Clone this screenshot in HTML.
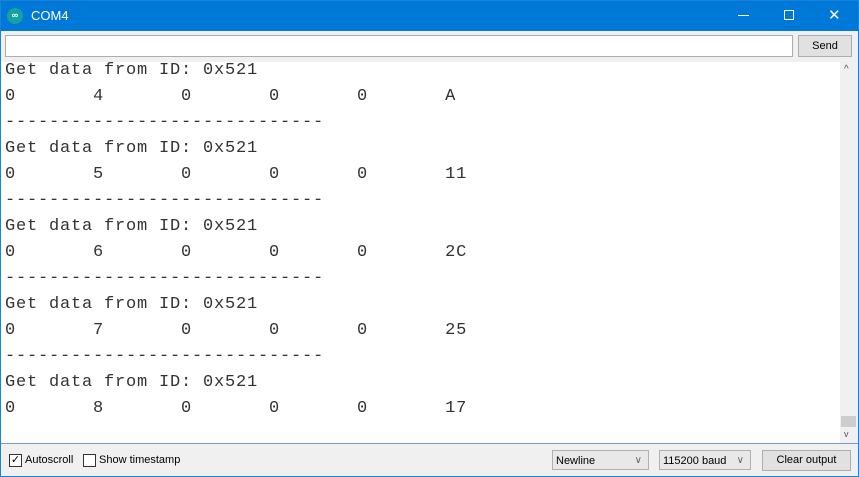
<!DOCTYPE html><html><head><style>
body{margin:0;width:859px;height:477px;overflow:hidden;background:#f0f0f0;font-family:"Liberation Sans",sans-serif;position:relative}
.b{position:absolute;box-sizing:border-box}
#win{left:0;top:0;width:859px;height:477px;border:1px solid #1883d7}
#title{left:0;top:0;width:859px;height:31px;background:#0078d7;color:#fff;font-size:12px}
#out{left:1px;top:62px;width:839px;height:381px;background:#fff;overflow:hidden}
pre{margin:0;position:absolute;left:4px;top:-4px;font-family:"Liberation Mono",monospace;font-size:17px;letter-spacing:0.8px;line-height:26px;color:#333}
.btn{background:#e1e1e1;border:1px solid #adadad;font-size:11px;text-align:center;color:#000}
.sel{background:#e8e8e8;border:1px solid #b0b0b0;font-size:11px;color:#000;padding:4px 0 0 3px}
.sel span{position:absolute;right:6px;top:4px;color:#666;font-size:10px}
.cb{width:13px;height:13px;border:1px solid #333;background:#fff}
</style></head><body>
<div class="b" id="title">
<div class="b" style="left:7px;top:8px;width:16px;height:16px;border-radius:50%;background:#16a2a0;color:#fff;font-size:9px;text-align:center;line-height:15px;font-weight:bold">∞</div>
<div class="b" style="left:31px;top:8px;font-size:13px">COM4</div>
<div class="b" style="left:738px;top:15px;width:11px;height:1px;background:#fff"></div>
<div class="b" style="left:784px;top:10px;width:10px;height:10px;border:1px solid #fff"></div>
<div class="b" style="left:828px;top:6px;font-size:15px;color:#fff">✕</div>
</div>
<div class="b" id="win"></div>
<div class="b" style="left:5px;top:35px;width:788px;height:22px;background:#fff;border:1px solid #adadad"></div>
<div class="b btn" style="left:798px;top:35px;width:54px;height:22px;line-height:20px">Send</div>
<div class="b" id="out"><pre>Get data from ID: 0x521
0       4       0       0       0       A
-----------------------------
Get data from ID: 0x521
0       5       0       0       0       11
-----------------------------
Get data from ID: 0x521
0       6       0       0       0       2C
-----------------------------
Get data from ID: 0x521
0       7       0       0       0       25
-----------------------------
Get data from ID: 0x521
0       8       0       0       0       17</pre></div>
<div class="b" style="left:840px;top:62px;width:17px;height:381px;background:#f0f0f0"></div>
<div class="b" style="left:844px;top:64px;font-size:10px;color:#555">^</div>
<div class="b" style="left:841px;top:416px;width:15px;height:11px;background:#cdcdcd"></div>
<div class="b" style="left:844px;top:429px;font-size:9px;color:#555">v</div>
<div class="b" style="left:1px;top:443px;width:857px;height:1px;background:#7a9cc4"></div>
<div class="b cb" style="left:9px;top:454px;font-size:11px;line-height:11px;text-align:center">✓</div>
<div class="b" style="left:25px;top:454px;font-size:11px">Autoscroll</div>
<div class="b cb" style="left:83px;top:454px"></div>
<div class="b" style="left:99px;top:454px;font-size:11px">Show timestamp</div>
<div class="b sel" style="left:552px;top:450px;width:97px;height:20px">Newline<span>∨</span></div>
<div class="b sel" style="left:659px;top:450px;width:92px;height:20px">115200 baud<span>∨</span></div>
<div class="b btn" style="left:762px;top:450px;width:89px;height:21px;line-height:19px">Clear output</div>
</body></html>
